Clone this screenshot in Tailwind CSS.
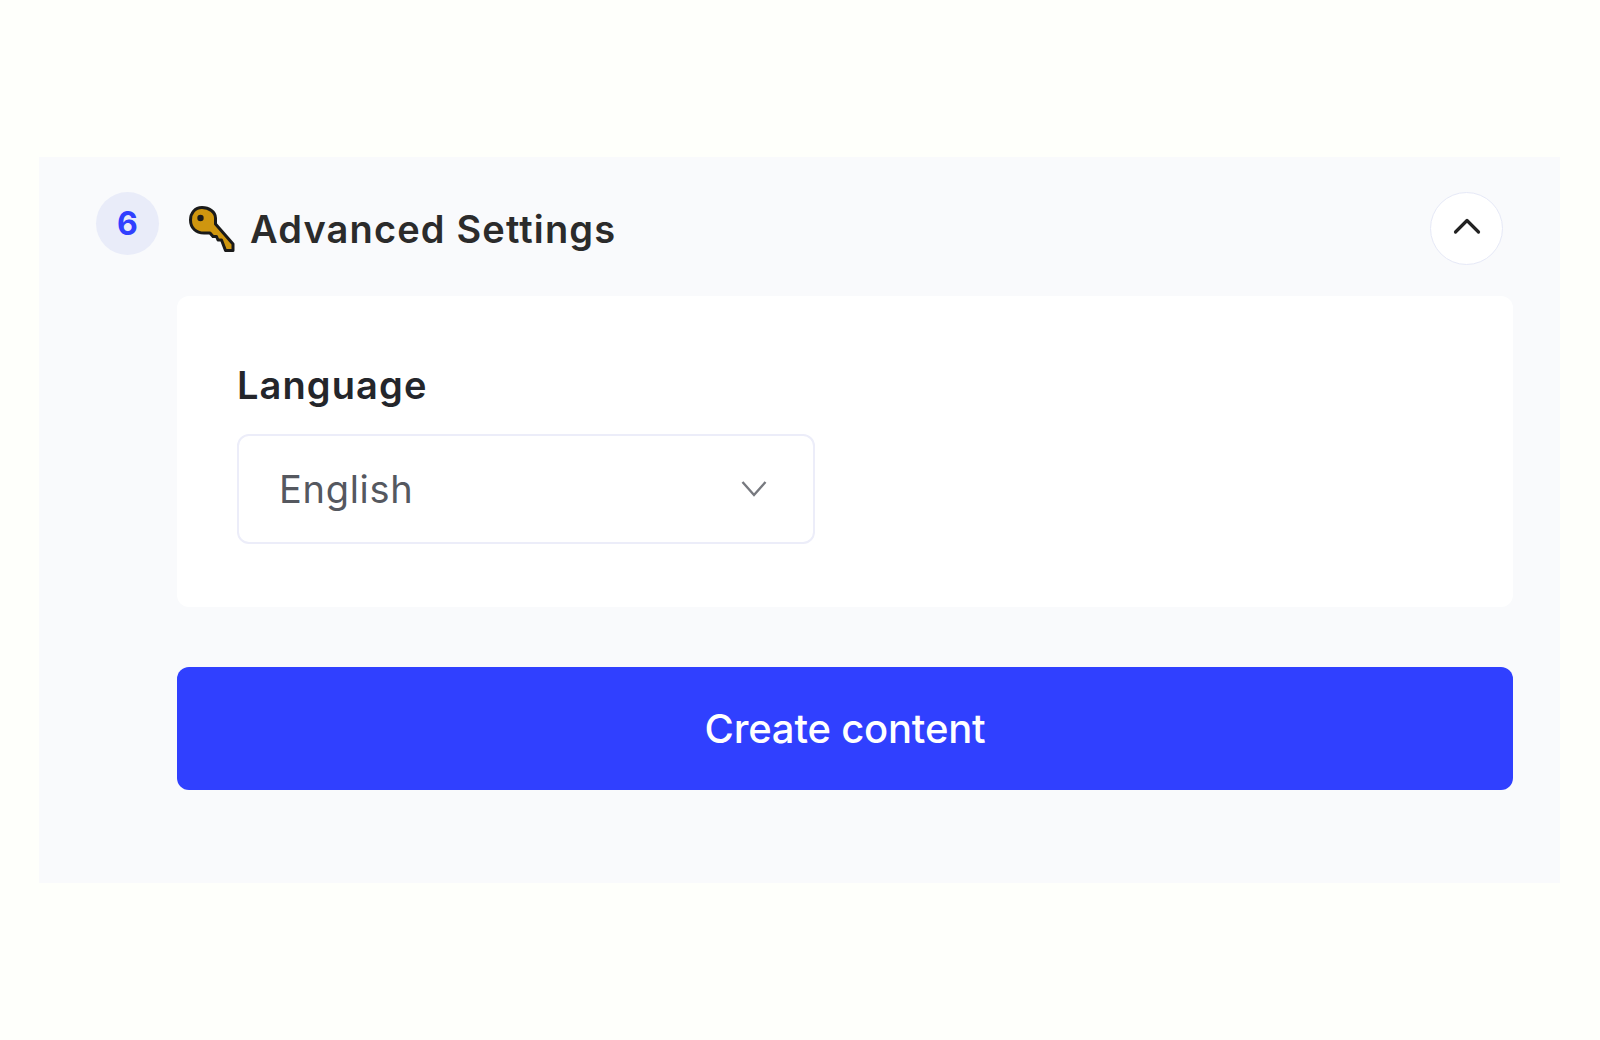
<!DOCTYPE html>
<html lang="en">
<head>
    <meta charset="UTF-8">
    <title>Advanced Settings</title>
    <script src="https://cdn.jsdelivr.net/npm/@tailwindcss/browser@4"></script>
</head>
<body class="bg-[#fefffb] min-h-screen font-['Inter',sans-serif] pt-[157px] pl-[39px]">
    <!-- Panel -->
    <div class="w-[1521px] h-[726px] bg-[#f9fafc] pt-[35px] pl-[57px]">
        <!-- Header -->
        <div class="flex items-start w-[1407px] h-[74px]">
            <div class="w-[63px] h-[63px] rounded-full bg-[#e9ecf9] flex items-center justify-center text-[32px] font-bold text-[#3040ff]">6</div>
            <svg class="ml-[21px] mt-[8px] w-[60px] h-[60px]" viewBox="0 0 60 60">
                <path d="M22 7.500 C15 7.500 10.500 13 10.500 20 C10.500 28 16 33 24 33 L30 33 L33 36.500 L36.500 36.500 L38 40 L41.500 40 L45.500 50.500 L53 50.500 L53 44 L35.500 24 L35.500 18 C35.500 12 29 7.500 22 7.500 Z" fill="#cf960f" stroke="#1a1a1a" stroke-width="3" stroke-linejoin="round"/>
                <circle cx="20.500" cy="18" r="3.200" fill="#1a1a1a"/>
            </svg>
            <h2 class="ml-[10px] mt-[11px] text-[38px] leading-[52px] font-semibold tracking-[1.15px] text-[#2b2b2b]">Advanced Settings</h2>
            <button class="ml-auto w-[73px] h-[73px] rounded-full bg-white border border-[#e6e9f7] flex items-center justify-center">
                <svg class="w-[28px] h-[20px] -mt-[5px]" viewBox="0 0 28 20" fill="none" stroke="#222" stroke-width="3.200" stroke-linecap="round" stroke-linejoin="round">
                    <path d="M2.500 16 L14 4.500 L25.500 16"/>
                </svg>
            </button>
        </div>

        <!-- Settings card -->
        <div class="ml-[81px] mt-[30px] w-[1336px] h-[311px] bg-white rounded-[12px] pl-[60px] pt-[65px]">
            <label class="block text-[38px] leading-[48px] font-semibold tracking-[1.1px] text-[#24262b]">Language</label>
            <div class="mt-[25px] w-[578px] h-[110px] rounded-[12px] border-2 border-[#ecedf9] bg-white pl-[40px] pr-[45px] flex items-center justify-between">
                <span class="text-[38px] tracking-[0.7px] text-[#55585f]">English</span>
                <svg class="w-[28px] h-[18px]" viewBox="0 0 28 18" fill="none" stroke="#77797f" stroke-width="2.400">
                    <path d="M2.500 2 L14 15 L25.500 2"/>
                </svg>
            </div>
        </div>

        <!-- Submit -->
        <button class="block ml-[81px] mt-[60px] w-[1336px] h-[123px] rounded-[12px] bg-[#3040ff] text-white text-[40px] font-medium tracking-[-0.2px]">Create content</button>
    </div>
</body>
</html>
